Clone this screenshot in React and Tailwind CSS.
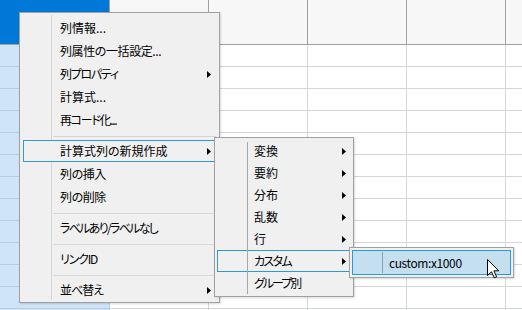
import React from "react";

// ── Menu data ──────────────────────────────────────────────────────────────
// kana in the original UI font are narrower, so kana-heavy labels get tighter tracking
const mainItems = [
  { label: "列情報..." },
  { label: "列属性の一括設定...", tr: "tracking-[-0.4px]" },
  { label: "列プロパティ", sub: true, tr: "tracking-[-1.3px]" },
  { label: "計算式..." },
  { label: "再コード化...", tr: "tracking-[-1.3px]" },
  "sep",
  { label: "計算式列の新規作成", sub: true, active: true },
  { label: "列の挿入", tr: "tracking-[-0.4px]" },
  { label: "列の削除", tr: "tracking-[-0.4px]" },
  "sep",
  { label: "ラベルあり/ラベルなし", tr: "tracking-[-1.7px]" },
  "sep",
  { label: "リンクID", tr: "tracking-[-1.2px]" },
  "sep",
  { label: "並べ替え", sub: true, tr: "tracking-[-1px]" },
];

const subItems = [
  { label: "変換", sub: true },
  { label: "要約", sub: true },
  { label: "分布", sub: true },
  { label: "乱数", sub: true },
  { label: "行", sub: true },
  { label: "カスタム", sub: true, active: true, tr: "tracking-[-1.7px]" },
  { label: "グループ別", tr: "tracking-[-2px]" },
];

const font = 'font-["Noto_Sans_CJK_JP",sans-serif] [font-feature-settings:"palt"] text-[12px] leading-[16px] text-black';

const Arrow = () => (
  <svg width="4" height="7" viewBox="0 0 4 7" className="ml-auto shrink-0">
    <path d="M0 0L4 3.5L0 7Z" fill="#000" />
  </svg>
);

// ── Spreadsheet background ────────────────────────────────────────────────
const Grid = () => (
  <div className="flex flex-col">
    <div className="flex h-[45px] border-b border-[#a0a0a0]">
      <div className="w-[110px] shrink-0 border-r border-[#a0a0a0] bg-[#0078d7]" />
      {[0, 1, 2, 3].map((i) => (
        <div key={i} className="w-[99px] shrink-0 border-r border-[#a0a0a0] bg-[#f7f7f7]" />
      ))}
      <div className="flex-1 bg-[#f7f7f7]" />
    </div>
    {Array.from({ length: 13 }).map((_, r) => (
      <div key={r} className="flex h-[22px]">
        <div className="w-[110px] shrink-0 border-b border-r border-[#b6cde2] bg-[#cfe4f7]" />
        {[0, 1, 2, 3].map((i) => (
          <div key={i} className="w-[99px] shrink-0 border-b border-r border-[#d5d5de]" />
        ))}
        <div className="flex-1 border-b border-[#d5d5de]" />
      </div>
    ))}
  </div>
);

// ── Main context menu ─────────────────────────────────────────────────────
const MainMenu = () => (
  <div className={`absolute left-[19px] top-[12px] w-[201px] border border-[#a0a0a0] bg-[#f0f0f0] pt-[3px] pb-[1px] shadow-[1px_1px_2px_rgba(0,0,0,0.15)] ${font}`}>
    <div className="absolute left-[31px] top-[2px] bottom-[2px] w-px bg-[#d7d7d7]" />
    {mainItems.map((it, i) =>
      it === "sep" ? (
        <div key={i} className="relative h-[8px] pt-[5px] pl-[33px] pr-[3px]">
          <div className="h-px bg-[#d7d7d7]" />
        </div>
      ) : (
        <div key={i} className="relative h-[23px] pt-[1px] px-[3px]">
          <div
            className={`flex h-[22px] items-center border pl-[36px] pr-[4px] ${
              it.active ? "border-[#2b9ad9] bg-[#f0f0f0]" : "border-transparent"
            }`}
          >
            <span className={it.tr}>{it.label}</span>
            {it.sub && <Arrow />}
          </div>
        </div>
      )
    )}
  </div>
);

// ── Sub menu ──────────────────────────────────────────────────────────────
const SubMenu = () => (
  <div className={`absolute left-[214px] top-[137px] w-[140px] border border-[#a0a0a0] bg-[#f0f0f0] p-[2px] shadow-[1px_1px_2px_rgba(0,0,0,0.15)] ${font}`}>
    {subItems.map((it, i) => (
      <div
        key={i}
        className={`flex h-[22px] items-center border pl-[36px] pr-[4px] ${
          it.active ? "border-[#2b9ad9]" : "border-transparent"
        }`}
      >
        <span className={it.tr}>{it.label}</span>
        {it.sub && <Arrow />}
      </div>
    ))}
    <div className="absolute left-[32px] top-[4px] bottom-[2px] w-px bg-[#a9a9a9]" />
  </div>
);

const CustomMenu = () => (
  <div className={`absolute left-[349px] top-[247px] w-[165px] border border-[#a0a0a0] bg-[#f0f0f0] p-[2px] shadow-[1px_1px_2px_rgba(0,0,0,0.15)] ${font}`}>
    <div className="flex h-[25px] items-center border border-[#2b9ad9] bg-[#c4dff0] pl-[36px]">
      <span className="tracking-[-0.4px]">custom:x1000</span>
    </div>
    <div className="absolute left-[32px] top-[4px] bottom-[4px] w-px bg-[#8aa4b6]" />
  </div>
);

const Cursor = () => (
  <svg width="13" height="20" viewBox="0 0 13 20" className="absolute left-[487px] top-[259px]">
    <path
      d="M0.5 0.5L0.5 16.5L4.5 12.8L7.3 18.8L9.6 17.8L6.9 11.8L11.8 11.8Z"
      fill="#fff"
      stroke="#000"
      strokeWidth="1"
      strokeLinejoin="miter"
    />
  </svg>
);

export default function App() {
  return (
    <div className="relative h-[310px] w-[522px] overflow-hidden bg-white">
      <Grid />
      <MainMenu />
      <SubMenu />
      <CustomMenu />
      <Cursor />
    </div>
  );
}
